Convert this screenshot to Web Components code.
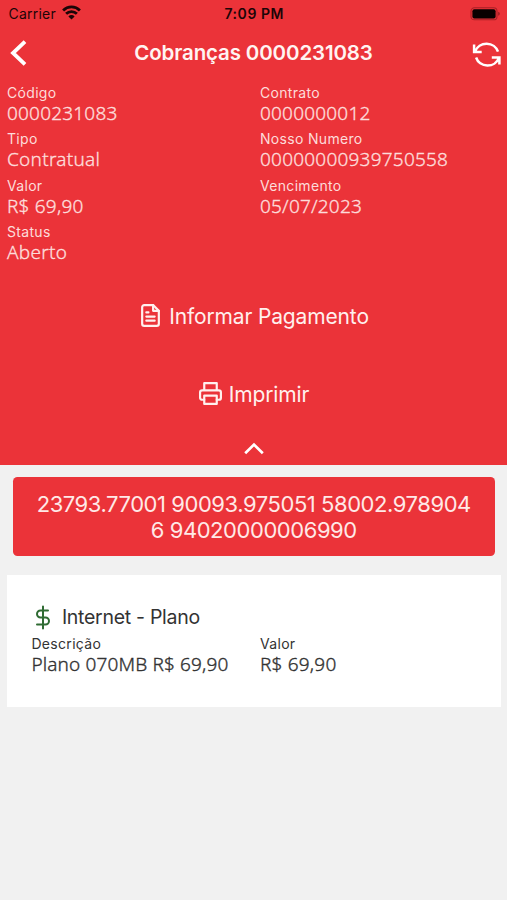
<!DOCTYPE html>
<html lang="pt-BR">
<head>
<meta charset="utf-8">
<title>Cobranças 0000231083</title>
<style>
html,body{margin:0;background:#f1f1f1}
body{font-family:Inter,"Liberation Sans",sans-serif;min-height:900px}
</style>
</head>
<body>
<billing-screen></billing-screen>
<script>
function define(name, html) {
  const template = document.createElement('template');
  template.innerHTML = html;
  customElements.define(name, class extends HTMLElement {
    constructor() {
      super();
      this.attachShadow({mode: 'open'}).append(template.content.cloneNode(true));
    }
  });
}

define('status-bar', `
<style>
:host{display:grid;grid-template-columns:1fr auto 1fr;align-items:center;height:27px;padding:0 7px 0 8.5px;color:#1c0507;font-size:14px;line-height:27px}
.left{display:flex;align-items:center;gap:6px;letter-spacing:.23px}
.time{font-weight:600;letter-spacing:.55px}
svg{display:block}
.wifi{margin-top:-2px}
.battery{justify-self:end}
</style>
<div class="left"><span>Carrier</span>
<svg class="wifi" width="19" height="15" viewBox="0 0 19 15" fill="none" stroke="#1c0507" stroke-width="2.8"><path d="M1.1 5.4a12 12 0 0 1 16.8 0M4.1 8.8a7.7 7.7 0 0 1 10.8 0"/><path d="M9.5 14.4 6.4 11.4a4.4 4.4 0 0 1 6.2 0z" fill="#1c0507" stroke="none"/></svg></div>
<span class="time">7:09 PM</span>
<svg class="battery" width="30" height="14" viewBox="0 0 30 14"><rect x="1" y=".8" width="26" height="12" rx="3.4" fill="none" stroke="#a82026" stroke-width="1.1"/><rect x="2.4" y="2.2" width="23.2" height="9.2" rx="2" fill="#080000"/><path d="M28.3 4.8v4q1.4-.5 1.4-2t-1.4-2z" fill="#8c1a1f"/></svg>`);

define('nav-bar', `
<style>
:host{display:grid;grid-template-columns:42px 1fr 42px;align-items:center;height:50px;color:#fff}
h1{margin:0;padding-top:1px;text-align:center;font-size:20.5px;font-weight:600;line-height:50px;letter-spacing:-.14px;white-space:nowrap;color:#fff4f2}
svg{display:block}
.back{margin-left:9px}
.refresh{margin:5px 0 0 7px}
</style>
<svg class="back" width="20" height="28" viewBox="0 0 20 28" fill="none" stroke="#fff" stroke-width="3.8"><path d="M16 2.6 4 14l12 11.4"/></svg>
<h1><slot></slot></h1>
<svg class="refresh" width="30" height="26" viewBox="0 0 30 26" fill="none" stroke="#fff" stroke-width="2.5"><path d="M2.1 2.4v7.5h7.6M26 9.7A12 11.4 0 0 0 3.2 9.3M27.4 22.6v-7.2h-7.6M4.1 15.5a12 11.4 0 0 0 22.800.4"/></svg>`);

define('data-field', `
<style>
:host{display:block;color:var(--field-color,#fddcda);white-space:nowrap}
.label{font-size:14px;line-height:18.5px;letter-spacing:.32px}
.value{font:300 19px/21px "Noto Sans","Open Sans",sans-serif;letter-spacing:var(--value-spacing,.2px);padding-top:.5px;-webkit-text-stroke:.35px currentColor}
</style>
<div class="label"><slot name="label"></slot></div>
<div class="value"><slot></slot></div>`);

define('field-grid', `
<style>
:host{display:grid;grid-template-columns:1fr 1fr;row-gap:6.4px}
</style><slot></slot>`);

define('action-button', `
<style>
:host{display:flex;justify-content:center;align-items:center;height:48px;font-size:21px;line-height:48px;letter-spacing:-.14px;color:#fff0ee}
svg,::slotted(svg){display:block}
span{padding:3px 0 0 6px}
</style>
<slot name="icon"></slot><span><slot></slot></span>`);

define('billing-header', `
<style>
:host{display:block;box-sizing:border-box;height:464.6px;background:#eb3339}
field-grid{padding:7px 0 0 7px;margin-right:-6px}
.actions{display:flex;flex-direction:column;gap:30px;margin-top:28.2px}
.toggle{display:block;margin:25px auto 0}
.long{--value-spacing:.22px}
.word{--value-spacing:.27px}
</style>
<status-bar></status-bar>
<nav-bar>Cobranças 0000231083</nav-bar>
<field-grid>
<data-field><span slot="label">Código</span>0000231083</data-field>
<data-field><span slot="label">Contrato</span>0000000012</data-field>
<data-field class="word"><span slot="label">Tipo</span>Contratual</data-field>
<data-field class="long"><span slot="label">Nosso Numero</span>00000000939750558</data-field>
<data-field><span slot="label">Valor</span>R$ 69,90</data-field>
<data-field><span slot="label">Vencimento</span>05/07/2023</data-field>
<data-field class="word"><span slot="label">Status</span>Aberto</data-field>
</field-grid>
<div class="actions">
<action-button><svg slot="icon" width="25" height="25" viewBox="0 0 24 24" fill="none" stroke="#fff0ee" stroke-width="2.1" stroke-linecap="round" stroke-linejoin="round"><path d="M14.5 2H6a2 2 0 0 0-2 2v16a2 2 0 0 0 2 2h12a2 2 0 0 0 2-2V7.5z"/><path d="M14.5 2v5.5H20M16 13H8M16 17H8M10 9H8"/></svg>Informar Pagamento</action-button>
<action-button><svg slot="icon" width="25" height="25" viewBox="0 0 24 24" fill="none" stroke="#fff0ee" stroke-width="2.1" stroke-linecap="round" stroke-linejoin="round"><path d="M6 9V2h12v7M6 18H4a2 2 0 0 1-2-2v-5a2 2 0 0 1 2-2h16a2 2 0 0 1 2 2v5a2 2 0 0 1-2 2h-2"/><path d="M6 14h12v8H6z"/></svg>Imprimir</action-button>
</div>
<svg class="toggle" width="22" height="13" viewBox="0 0 22 13" fill="none" stroke="#fff" stroke-width="2.7"><path d="M2.2 11.2 11 2.6l8.8 8.6"/></svg>`);

define('barcode-card', `
<style>
:host{display:block;box-sizing:border-box;margin:12.4px 12.5px 0 13px;height:79.4px;padding:14px 0;background:#eb3339;border-radius:4.5px;color:#ffe9e7;font-size:22px;line-height:26px;letter-spacing:-.44px;text-align:center;white-space:nowrap}
</style><slot></slot>`);

define('item-card', `
<style>
:host{display:block;box-sizing:border-box;margin:18.2px 6px 0 7px;height:132.5px;padding:29px 0 0 24.4px;background:#fff;--field-color:#333}
.title{display:flex;align-items:center;height:27px;font-size:19.5px;line-height:27px;letter-spacing:-.288px;color:#333}
.title svg{margin:0 6.5px 0 0}
field-grid{grid-template-columns:228.6px 1fr;padding-top:4px}
</style>
<div class="title"><svg width="24" height="25" viewBox="0 0 24 24" fill="none" stroke="#2f6b33" stroke-width="2" stroke-linecap="round" stroke-linejoin="round"><path d="M12 1v22M17 5H9.500a3.500 3.500 0 0 0 0 7h5a3.500 3.500 0 0 1 0 7H6"/></svg><slot name="title"></slot></div>
<field-grid><slot></slot></field-grid>`);

define('billing-screen', `
<style>:host{display:block;height:900px;overflow:hidden;background:#f1f1f1}.plan{--value-spacing:.14px}</style>
<billing-header></billing-header>
<barcode-card>23793.77001 90093.975051 58002.978904<br>6 94020000006990</barcode-card>
<item-card><span slot="title">Internet - Plano</span>
<data-field class="plan"><span slot="label">Descrição</span>Plano 070MB R$ 69,90</data-field>
<data-field><span slot="label">Valor</span>R$ 69,90</data-field>
</item-card>`);
</script>
</body>
</html>
